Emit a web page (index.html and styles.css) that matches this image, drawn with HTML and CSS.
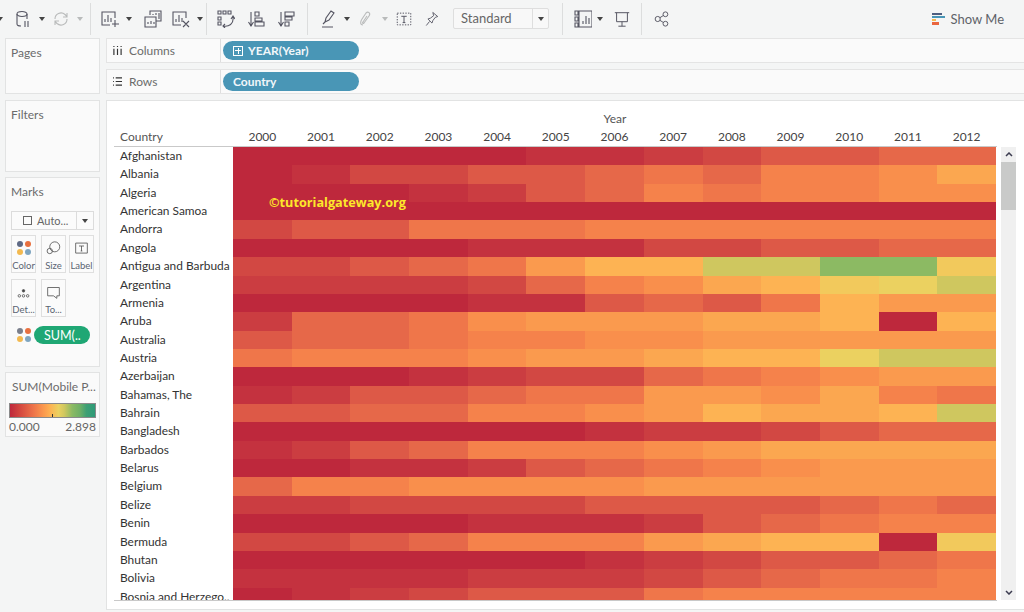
FILE: index.html
```html
<!DOCTYPE html>
<html lang="en">
<head>
<meta charset="utf-8">
<title>Tableau heat map</title>
<link rel="stylesheet" href="styles.css">
</head>
<body>
<header class="toolbar">
  <div class="tgroup g1">
    <span class="dd cut"></span>
    <svg class="ic first" viewBox="0 0 18 18"><ellipse cx="8" cy="4" rx="5" ry="2.5"/><path d="M3 4v10c0 1 1 2 4 2M13 4v5M11 11v6M14 11v6"/></svg>
    <span class="dd"></span>
    <svg class="ic off" viewBox="0 0 18 18"><path d="M3 9a6 6 0 0 1 10-4.5l2 2M15 9a6 6 0 0 1-10 4.5l-2-2M15 3v4h-4M3 15v-4h4"/></svg>
    <span class="dd off"></span>
  </div>
  <div class="tgroup g2">
    <svg class="ic" viewBox="0 0 18 18"><path d="M14 8V2H1v13h8M4 12V9M7 12V5M10 12V8M14 10v7M11 14h7"/></svg>
    <span class="dd"></span>
    <svg class="ic more" viewBox="0 0 18 18"><path d="M6 5V1h11v10h-5M1 7h11v10H1zM9 5V4M12 5V3M15 9V3M4 14v-2M7 14v-3M10 14v-2"/></svg>
    <svg class="ic more" viewBox="0 0 18 18"><path d="M14 8V2H1v13h8M4 12V9M7 12V5M10 12V8M11 11l6 6M17 11l-6 6"/></svg>
    <span class="dd"></span>
  </div>
  <div class="tgroup g3">
    <svg class="ic" viewBox="0 0 18 18"><path d="M1 1h3v3H1zM6 1h3v3H6zM11 1h3v3h-3zM1 7h3v3H1zM1 12h3v3H1zM6 16c6 1 11-2 10-9M14 9l2-3 2 3M8 14l-2 2 2 2"/></svg>
    <svg class="ic" viewBox="0 0 18 18"><path d="M4 2v13M1.500 12l2.500 4 2.500-4M8 2h4v4H8zM8 8h7v3H8zM8 12h9v4H8z"/></svg>
    <svg class="ic" viewBox="0 0 18 18"><path d="M4 2v13M1.500 12l2.500 4 2.500-4M8 2h9v4H8zM8 7h7v3H8zM8 12h4v4H8z"/></svg>
  </div>
  <div class="tgroup g4">
    <svg class="ic" viewBox="0 0 18 18"><path d="M6 12l1-4 5-7 3 2-5 7zM4 14l2-2M3 17h11"/></svg>
    <span class="dd"></span>
    <svg class="ic off" viewBox="0 0 18 18"><path d="M6 15c-3 0-3-3-1-6l4-6c2-2 5 0 3 3l-5 7c-1 1-2 0-1-1l4-6"/></svg>
    <span class="dd off"></span>
    <svg class="ic" viewBox="-1 -1 20 20"><path class="dash" d="M1.500 2.500h15v13h-15z"/><path d="M6 6h6M9 6v7M7.500 13h3"/></svg>
    <svg class="ic more" viewBox="-2 -2 22 22"><path d="M10 1l6 5-3 1-3 4-1 3-5-5 3-1 4-3zM6 12l-4 5"/></svg>
    <div class="select"><span class="select-text">Standard</span><span class="select-arrow"><span class="dd"></span></span></div>
  </div>
  <div class="tgroup g5">
    <svg class="ic" viewBox="0 0 18 18"><path d="M1 1h3v4H1zM1 7h3v4H1zM1 13h3v4H1zM5 1h13v16H5zM9 14v-3M12 14V6M15 14V8"/></svg>
    <span class="dd"></span>
    <svg class="ic more" viewBox="-1 -1 20 20"><path d="M1 2h16M3 2v10h12V2M9 12v5M5 17h8"/></svg>
  </div>
  <div class="tgroup g6">
    <svg class="ic" viewBox="-1.500 -1.500 21 21"><circle cx="4" cy="9" r="3"/><circle cx="13" cy="3.500" r="2.800"/><circle cx="13" cy="14.500" r="2.800"/><path d="M6.500 7.500l4-2.500M6.500 10.500l4 2.500"/></svg>
  </div>
  <div class="showme">
    <span class="showme-ic"><b class="sm1"></b><b class="sm2"></b><b class="sm3"></b><b class="sm4"></b></span>
    <span>Show Me</span>
  </div>
</header>

<main class="main">
  <aside class="side">
    <section class="panel pages"><h2>Pages</h2></section>
    <section class="panel filters"><h2>Filters</h2></section>
    <section class="panel marks">
      <h2>Marks</h2>
      <div class="marktype">
        <span class="marktype-main"><span class="sq"></span>Auto...</span>
        <span class="marktype-arrow"><span class="dd"></span></span>
      </div>
      <div class="cards">
        <div class="card"><span class="dots"><b class="d1"></b><b class="d2"></b><b class="d3"></b><b class="d4"></b></span><span>Color</span></div>
        <div class="card"><svg class="mi" viewBox="0 0 18 18"><circle cx="10.500" cy="7" r="6"/><circle cx="4.500" cy="12" r="3.200"/></svg><span>Size</span></div>
        <div class="card"><svg class="mi" viewBox="0 0 18 18"><path d="M2 2.500h14v12H2zM6 6h6M9 6v6M8 12h2"/></svg><span>Label</span></div>
      </div>
      <div class="cards second">
        <div class="card"><svg class="mi" viewBox="0 0 18 18"><circle class="fill" cx="9" cy="7" r="1.500"/><circle cx="4" cy="13" r="1.500"/><circle cx="9" cy="13" r="1.500"/><circle cx="14" cy="13" r="1.500"/></svg><span>Det...</span></div>
        <div class="card"><svg class="mi" viewBox="0 0 18 18"><path d="M2 3h14v10h-3v3l-4-3H2z"/></svg><span>To...</span></div>
      </div>
      <div class="markfield">
        <span class="dots small"><b class="d5"></b><b class="d2"></b><b class="d3"></b><b class="d4"></b></span>
        <span class="pill green">SUM(..</span>
      </div>
    </section>
    <section class="panel legend">
      <h2>SUM(Mobile P...</h2>
      <div class="ramp"><span class="tick"></span></div>
      <div class="ramp-labels"><span>0.000</span><span>2.898</span></div>
    </section>
  </aside>

  <div class="content">
    <div class="shelf">
      <div class="shelf-label"><svg class="si" viewBox="0 0 10 10"><path d="M1 0v1M5 0v1M9 0v1M1 3v7M5 3v7M9 3v7"/></svg>Columns</div>
      <span class="pill blue wide"><span class="plus"></span>YEAR(Year)</span>
    </div>
    <div class="shelf">
      <div class="shelf-label"><svg class="si" viewBox="0 0 10 10"><path d="M0 1h1M3 1h7M0 5h1M3 5h7M0 9h1M3 9h7"/></svg>Rows</div>
      <span class="pill blue wide">Country</span>
    </div>

    <section class="view">
      <div class="chart">
        <div class="caption">Year</div>
        <div class="row head"><span>Country</span><em>2000</em><em>2001</em><em>2002</em><em>2003</em><em>2004</em><em>2005</em><em>2006</em><em>2007</em><em>2008</em><em>2009</em><em>2010</em><em>2011</em><em>2012</em></div>
        <div class="rows">
          <div class="row"><span>Afghanistan</span><i class="a"></i><i class="a"></i><i class="a"></i><i class="a"></i><i class="a"></i><i class="b"></i><i class="b"></i><i class="c"></i><i class="d"></i><i class="e"></i><i class="e"></i><i class="f"></i><i class="f"></i></div>
          <div class="row"><span>Albania</span><i class="a"></i><i class="b"></i><i class="d"></i><i class="d"></i><i class="e"></i><i class="e"></i><i class="f"></i><i class="g"></i><i class="f"></i><i class="h"></i><i class="h"></i><i class="i"></i><i class="k"></i></div>
          <div class="row"><span>Algeria</span><i class="a"></i><i class="a"></i><i class="a"></i><i class="b"></i><i class="c"></i><i class="e"></i><i class="f"></i><i class="h"></i><i class="g"></i><i class="h"></i><i class="h"></i><i class="i"></i><i class="i"></i></div>
          <div class="row"><span>American Samoa</span><i class="a"></i><i class="a"></i><i class="a"></i><i class="a"></i><i class="a"></i><i class="a"></i><i class="a"></i><i class="a"></i><i class="a"></i><i class="a"></i><i class="a"></i><i class="a"></i><i class="a"></i></div>
          <div class="row"><span>Andorra</span><i class="d"></i><i class="e"></i><i class="e"></i><i class="g"></i><i class="g"></i><i class="g"></i><i class="h"></i><i class="h"></i><i class="h"></i><i class="h"></i><i class="h"></i><i class="h"></i><i class="h"></i></div>
          <div class="row"><span>Angola</span><i class="a"></i><i class="a"></i><i class="a"></i><i class="a"></i><i class="b"></i><i class="b"></i><i class="b"></i><i class="d"></i><i class="d"></i><i class="e"></i><i class="e"></i><i class="f"></i><i class="f"></i></div>
          <div class="row"><span>Antigua and Barbuda</span><i class="d"></i><i class="d"></i><i class="e"></i><i class="f"></i><i class="g"></i><i class="j"></i><i class="l"></i><i class="l"></i><i class="o"></i><i class="o"></i><i class="p"></i><i class="p"></i><i class="m"></i></div>
          <div class="row"><span>Argentina</span><i class="c"></i><i class="c"></i><i class="c"></i><i class="c"></i><i class="d"></i><i class="f"></i><i class="h"></i><i class="i"></i><i class="k"></i><i class="l"></i><i class="m"></i><i class="n"></i><i class="o"></i></div>
          <div class="row"><span>Armenia</span><i class="a"></i><i class="a"></i><i class="a"></i><i class="a"></i><i class="b"></i><i class="b"></i><i class="e"></i><i class="f"></i><i class="e"></i><i class="g"></i><i class="l"></i><i class="j"></i><i class="j"></i></div>
          <div class="row"><span>Aruba</span><i class="c"></i><i class="f"></i><i class="f"></i><i class="g"></i><i class="i"></i><i class="j"></i><i class="j"></i><i class="j"></i><i class="k"></i><i class="k"></i><i class="l"></i><i class="a"></i><i class="l"></i></div>
          <div class="row"><span>Australia</span><i class="e"></i><i class="f"></i><i class="f"></i><i class="g"></i><i class="h"></i><i class="h"></i><i class="i"></i><i class="i"></i><i class="j"></i><i class="j"></i><i class="j"></i><i class="j"></i><i class="j"></i></div>
          <div class="row"><span>Austria</span><i class="g"></i><i class="h"></i><i class="h"></i><i class="h"></i><i class="i"></i><i class="j"></i><i class="j"></i><i class="k"></i><i class="l"></i><i class="l"></i><i class="n"></i><i class="o"></i><i class="o"></i></div>
          <div class="row"><span>Azerbaijan</span><i class="a"></i><i class="a"></i><i class="a"></i><i class="b"></i><i class="c"></i><i class="d"></i><i class="d"></i><i class="f"></i><i class="g"></i><i class="h"></i><i class="i"></i><i class="j"></i><i class="j"></i></div>
          <div class="row"><span>Bahamas, The</span><i class="b"></i><i class="c"></i><i class="e"></i><i class="e"></i><i class="f"></i><i class="g"></i><i class="g"></i><i class="j"></i><i class="j"></i><i class="i"></i><i class="k"></i><i class="h"></i><i class="g"></i></div>
          <div class="row"><span>Bahrain</span><i class="e"></i><i class="e"></i><i class="f"></i><i class="f"></i><i class="h"></i><i class="h"></i><i class="i"></i><i class="j"></i><i class="l"></i><i class="k"></i><i class="k"></i><i class="l"></i><i class="o"></i></div>
          <div class="row"><span>Bangladesh</span><i class="a"></i><i class="a"></i><i class="a"></i><i class="a"></i><i class="a"></i><i class="a"></i><i class="b"></i><i class="c"></i><i class="c"></i><i class="d"></i><i class="e"></i><i class="f"></i><i class="f"></i></div>
          <div class="row"><span>Barbados</span><i class="b"></i><i class="c"></i><i class="e"></i><i class="f"></i><i class="h"></i><i class="h"></i><i class="h"></i><i class="i"></i><i class="j"></i><i class="k"></i><i class="k"></i><i class="k"></i><i class="k"></i></div>
          <div class="row"><span>Belarus</span><i class="a"></i><i class="a"></i><i class="b"></i><i class="b"></i><i class="c"></i><i class="e"></i><i class="f"></i><i class="g"></i><i class="h"></i><i class="i"></i><i class="j"></i><i class="j"></i><i class="j"></i></div>
          <div class="row"><span>Belgium</span><i class="f"></i><i class="h"></i><i class="h"></i><i class="i"></i><i class="i"></i><i class="i"></i><i class="i"></i><i class="j"></i><i class="j"></i><i class="j"></i><i class="j"></i><i class="j"></i><i class="j"></i></div>
          <div class="row"><span>Belize</span><i class="c"></i><i class="c"></i><i class="d"></i><i class="d"></i><i class="d"></i><i class="d"></i><i class="e"></i><i class="e"></i><i class="e"></i><i class="e"></i><i class="f"></i><i class="g"></i><i class="f"></i></div>
          <div class="row"><span>Benin</span><i class="a"></i><i class="a"></i><i class="a"></i><i class="a"></i><i class="b"></i><i class="b"></i><i class="b"></i><i class="c"></i><i class="e"></i><i class="f"></i><i class="g"></i><i class="h"></i><i class="h"></i></div>
          <div class="row"><span>Bermuda</span><i class="d"></i><i class="d"></i><i class="e"></i><i class="f"></i><i class="h"></i><i class="h"></i><i class="h"></i><i class="j"></i><i class="k"></i><i class="l"></i><i class="l"></i><i class="a"></i><i class="m"></i></div>
          <div class="row"><span>Bhutan</span><i class="a"></i><i class="a"></i><i class="a"></i><i class="a"></i><i class="a"></i><i class="a"></i><i class="b"></i><i class="c"></i><i class="d"></i><i class="e"></i><i class="e"></i><i class="f"></i><i class="g"></i></div>
          <div class="row"><span>Bolivia</span><i class="b"></i><i class="b"></i><i class="b"></i><i class="b"></i><i class="c"></i><i class="c"></i><i class="c"></i><i class="d"></i><i class="e"></i><i class="f"></i><i class="g"></i><i class="g"></i><i class="h"></i></div>
          <div class="row"><span>Bosnia and Herzego..</span><i class="a"></i><i class="b"></i><i class="c"></i><i class="d"></i><i class="e"></i><i class="e"></i><i class="e"></i><i class="g"></i><i class="h"></i><i class="h"></i><i class="h"></i><i class="h"></i><i class="h"></i></div>
        </div>
        <div class="watermark">©tutorialgateway.org</div>
      </div>
      <div class="scrollbar">
        <span class="sb-btn"><svg class="chev" viewBox="0 0 8 5"><path d="M1 4l3-3 3 3"/></svg></span>
        <span class="sb-thumb"></span>
        <span class="sb-fill"></span>
        <span class="sb-btn"><svg class="chev" viewBox="0 0 8 5"><path d="M1 1l3 3 3-3"/></svg></span>
      </div>
    </section>
  </div>
</main>
</body>
</html>
```
FILE: styles.css
```css
* { box-sizing: border-box; }
html, body { height: 100%; }
body {
  margin: 0;
  width: 1024px;
  height: 612px;
  overflow: hidden;
  background: #f4f5f5;
  color: #555;
  font-family: "Lato", "Liberation Sans", sans-serif;
  font-size: 12px;
}
h2 { margin: 0; font-weight: 400; font-size: 12px; color: #6b6b6b; }

/* Toolbar */
.toolbar { height: 37px; display: flex; align-items: center; }
.tgroup { height: 32px; display: flex; align-items: center; border-right: 1px solid #dcdddd; flex: none; }
.g1 { width: 91px; gap: 5px; }
.g2 { width: 116px; padding-left: 10px; gap: 5px; }
.g3 { width: 101px; padding-left: 10px; gap: 12px; }
.g4 { width: 255px; padding-left: 11px; gap: 5px; }
.g5 { width: 79px; padding-left: 11px; gap: 3px; }
.g6 { width: 200px; padding-left: 11px; border-right: 0; }
.ic { width: 18px; height: 18px; flex: none; fill: none; stroke: #555562; stroke-width: 1.1; }
.ic.off { stroke: #b9bbbb; }
.ic.first { margin-left: 9px; }
.ic.more { margin-left: 5px; }
.dash { stroke-dasharray: 1.500 1.500; }
.dd { width: 0; height: 0; flex: none; margin: 0 2px; border: 3px solid transparent; border-top: 4px solid #444; border-bottom: 0; }
.dd.off { border-top-color: #b9bbbb; }
.dd.cut { margin: 0 -3px 0 -3px; }
.select {
  width: 96px; height: 21px; margin-left: 7px; display: flex;
  background: #f8f8f8; border: 1px solid #dedede; border-radius: 2px;
  color: #666; font-size: 13px; line-height: 19px;
}
.select-text { flex: 1; padding-left: 7px; }
.select-arrow { width: 16px; border-left: 1px solid #dedede; display: flex; align-items: center; justify-content: center; }
.showme { margin-left: auto; margin-right: 20px; display: flex; align-items: center; gap: 6px; font-size: 13px; color: #5f6369; }
.showme-ic { width: 13px; display: flex; flex-direction: column; gap: 1px; }
.showme-ic b { height: 2px; display: block; }
.sm1 { width: 10px; background: #4e5e80; }
.sm2 { width: 13px; background: #4996b6; }
.sm3 { width: 4px; background: #f5b94f; }
.sm4 { width: 7px; height: 3px !important; background: #e9663f; }

/* Layout */
.main { display: flex; gap: 6px; padding-left: 5px; height: 575px; align-items: flex-start; }
.side { width: 95px; flex: none; display: flex; flex-direction: column; padding-top: 1px; }
.panel { background: #fafafa; border: 1px solid #e2e3e3; padding: 6px 5px 5px; }
.pages { height: 56px; }
.filters { height: 72px; margin-top: 6px; }
.marks { height: 190px; margin-top: 5px; }
.legend { height: 65px; margin-top: 5px; padding: 6px 3px 0; }
.legend h2 { padding-left: 3px; white-space: nowrap; }

/* Marks */
.marktype { margin-top: 12px; height: 19px; display: flex; background: #fbfbfb; border: 1px solid #dcdcdc; font-size: 11px; line-height: 17px; color: #666; }
.marktype-main { flex: 1; display: flex; align-items: center; gap: 5px; padding-left: 11px; border-right: 1px solid #dcdcdc; }
.marktype-arrow { width: 16px; display: flex; align-items: center; justify-content: center; }
.sq { width: 9px; height: 9px; border: 1px solid #666; }
.cards { display: flex; gap: 5px; margin-top: 5px; }
.cards.second { margin-top: 6px; }
.card { width: 25px; height: 38px; flex: none; display: flex; flex-direction: column; align-items: center; justify-content: space-between; padding: 5px 0 1px; background: #fbfbfb; border: 1px solid #dfdfdf; font-size: 9.500px; line-height: 11px; color: #5a6472; white-space: nowrap; }
.cards .card:nth-child(3) { margin-left: -2px; }
.mi { width: 15px; height: 15px; fill: none; stroke: #555; stroke-width: 1; }
.mi .fill { fill: #444; }
.dots { width: 14px; display: grid; grid-template-columns: 6px 6px; gap: 2px; }
.dots b { width: 6px; height: 6px; border-radius: 50%; display: block; }
.d1 { background: #5f6a85; }
.d2 { background: #e8703f; }
.d3 { background: #f3b94f; }
.d4 { background: #7fa5c0; }
.d5 { background: #7a7f8c; }
.markfield { display: flex; align-items: center; gap: 3px; margin-top: 9px; padding-left: 6px; }
.pill { display: flex; align-items: center; height: 18px; border-radius: 9px; color: #fff; font-size: 12px; white-space: nowrap; }
.green { width: 56px; background: #1fa774; padding-left: 10px; font-size: 12.500px; }
.blue { background: #4996b6; }
.wide { width: 136px; height: 19px; border-radius: 10px; padding-left: 10px; font-weight: 700; color: #f2f7fa; }
.plus { width: 10px; height: 10px; margin-right: 5px; border: 1px solid #fff; background: linear-gradient(#fff, #fff) center/6px 1px no-repeat, linear-gradient(#fff, #fff) center/1px 6px no-repeat; }

/* Legend */
.ramp {
  position: relative; height: 15px; margin-top: 9px;
  border: 1px solid #8a8a8a;
  background: linear-gradient(90deg, #be283c 0%, #d4483f 12%, #ee754a 28%, #fb9a4e 40%, #fdb152 47%, #ebd160 57%, #cfc75f 64%, #8cba63 73%, #6fb066 82%, #3d9f74 90%, #2e9a78 100%);
}
.tick { position: absolute; left: 42px; bottom: 0; width: 1px; height: 3px; background: #333; }
.ramp-labels { display: flex; justify-content: space-between; font-size: 12px; line-height: 14px; margin-top: 2px; color: #666; }

/* Shelves */
.content { width: 918px; flex: none; display: flex; flex-direction: column; gap: 6px; padding-top: 1px; }
.shelf { height: 25px; margin-bottom: 0; display: flex; align-items: center; background: #fafafa; border-top: 1px solid #e4e4e4; border-bottom: 1px solid #e4e4e4; border-left: 1px solid #e4e4e4; }
.shelf-label { width: 114px; height: 100%; flex: none; display: flex; align-items: center; gap: 7px; padding-left: 6px; margin-right: 2px; border-right: 1px solid #dedede; color: #6c6c6c; }
.si { width: 9px; height: 9px; fill: none; stroke: #333; stroke-width: 1.300; }

/* View */
.view { height: 510px; display: flex; background: #fff; border: 1px solid #e2e3e3; border-right: 0; padding: 8px 0 0 7px; gap: 4px; }
.chart { width: 883px; height: 492px; display: flex; flex-direction: column; position: relative; }
.caption { height: 19px; padding-left: 119px; text-align: center; line-height: 19px; color: #555; }
.row { display: grid; grid-template-columns: 119px repeat(13, 58.700px); height: 18.360px; }
.row span { padding-left: 6px; color: #333; font-size: 11.900px; line-height: 18px; white-space: nowrap; overflow: hidden; }
.row i { display: block; }
.head { height: 19px; border-bottom: 1px solid #c9c9c9; }
.head span { color: #555; font-size: 12px; }
.head em { font-style: normal; text-align: center; line-height: 18px; color: #444; }
.rows { height: 454px; overflow: hidden; border-bottom: 1px solid #c9c9c9; }
.a { background: #be283c; }
.b { background: #c4323f; }
.c { background: #cb3d41; }
.d { background: #d24843; }
.e { background: #dd5947; }
.f { background: #e66849; }
.g { background: #ef764a; }
.h { background: #f5824b; }
.i { background: #f98f4c; }
.j { background: #fa9a4e; }
.k { background: #fba750; }
.l { background: #fdb353; }
.m { background: #f2c95c; }
.n { background: #ebd160; }
.o { background: #cfc75f; }
.p { background: #8cba63; }
.watermark { position: absolute; left: 155px; top: 84px; font-family: "Open Sans", sans-serif; font-weight: 700; font-size: 12.700px; color: #fde82a; white-space: nowrap; }

/* Scrollbar */
.scrollbar { width: 15px; height: 453px; margin-top: 38px; display: flex; flex-direction: column; background: #f0f0f0; }
.sb-btn { height: 15px; display: flex; align-items: center; justify-content: center; flex: none; }
.sb-thumb { height: 48px; background: #c9cac9; flex: none; }
.sb-fill { flex: 1; }
.chev { width: 8px; height: 5px; fill: none; stroke: #3c3c50; stroke-width: 1.500; }
```
